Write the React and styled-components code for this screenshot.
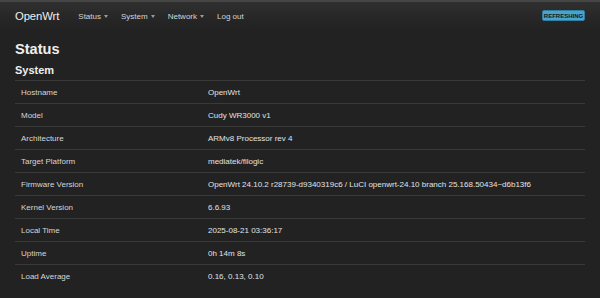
import React from "react";
import styled, { createGlobalStyle } from "styled-components";

const GlobalStyle = createGlobalStyle`
  html, body {
    margin: 0;
    padding: 0;
    background: #222222;
    font-family: "Liberation Sans", Arial, Helvetica, sans-serif;
    color: #dddddd;
  }
`;

const Header = styled.header`
  height: 30px;
  box-sizing: border-box;
  border-top: 2px solid #454545;
  background: linear-gradient(to bottom, #303030 0%, #262626 60%, #222222 100%);
  display: flex;
  align-items: center;
  padding: 0 15px;
`;

const Brand = styled.a`
  font-size: 11.3px;
  color: #f0f0f0;
  text-decoration: none;
  margin-right: 19px;
  letter-spacing: -0.1px;
`;

const Nav = styled.nav`
  display: flex;
  align-items: center;
  gap: 13px;
  flex: 1;
`;

const NavItem = styled.a`
  display: flex;
  align-items: center;
  font-size: 8px;
  color: #d4d4d4;
  text-decoration: none;
`;

const Caret = styled.span`
  width: 0;
  height: 0;
  margin-left: 3px;
  margin-top: 1px;
  border-left: 2.5px solid transparent;
  border-right: 2.5px solid transparent;
  border-top: 3px solid #9a9a9a;
`;

const Badge = styled.span`
  display: inline-flex;
  align-items: center;
  justify-content: center;
  height: 11px;
  width: 43px;
  box-sizing: border-box;
  background: #4aa3cc;
  border: 1px solid #2f7fa3;
  border-radius: 2px;
  color: #0e1a20;
  font-size: 6px;
  font-weight: bold;
  margin-top: -1px;
`;

const Main = styled.main`
  padding: 0 15px;
`;

const Title = styled.h2`
  margin: 9.5px 0 0;
  font-size: 14.6px;
  line-height: 18px;
  font-weight: bold;
  color: #eeeeee;
`;

const Section = styled.h3`
  margin: 5.5px 0 3px;
  font-size: 11px;
  line-height: 14px;
  font-weight: bold;
  color: #eeeeee;
`;

const Table = styled.div`
  display: grid;
  grid-template-columns: 187px 1fr;
`;

const Cell = styled.div`
  height: 23px;
  box-sizing: border-box;
  border-top: 1px solid #3a3a3a;
  display: flex;
  align-items: center;
  padding-left: 6px;
  font-size: 8px;
  color: ${(p) => (p.$key ? "#d6d6d6" : "#e2e2e2")};
  white-space: nowrap;
`;

const rows = [
  ["Hostname", "OpenWrt"],
  ["Model", "Cudy WR3000 v1"],
  ["Architecture", "ARMv8 Processor rev 4"],
  ["Target Platform", "mediatek/filogic"],
  [
    "Firmware Version",
    "OpenWrt 24.10.2 r28739-d9340319c6 / LuCI openwrt-24.10 branch 25.168.50434~d6b13f6",
  ],
  ["Kernel Version", "6.6.93"],
  ["Local Time", "2025-08-21 03:36:17"],
  ["Uptime", "0h 14m 8s"],
  ["Load Average", "0.16, 0.13, 0.10"],
];

export default function App() {
  return (
    <>
      <GlobalStyle />
      <Header>
        <Brand href="#">OpenWrt</Brand>
        <Nav>
          <NavItem href="#">
            Status <Caret />
          </NavItem>
          <NavItem href="#">
            System <Caret />
          </NavItem>
          <NavItem href="#">
            Network <Caret />
          </NavItem>
          <NavItem href="#">Log out</NavItem>
        </Nav>
        <Badge>REFRESHING</Badge>
      </Header>
      <Main>
        <Title>Status</Title>
        <Section>System</Section>
        <Table>
          {rows.map(([k, v]) => (
            <React.Fragment key={k}>
              <Cell $key>{k}</Cell>
              <Cell>{v}</Cell>
            </React.Fragment>
          ))}
        </Table>
      </Main>
    </>
  );
}
